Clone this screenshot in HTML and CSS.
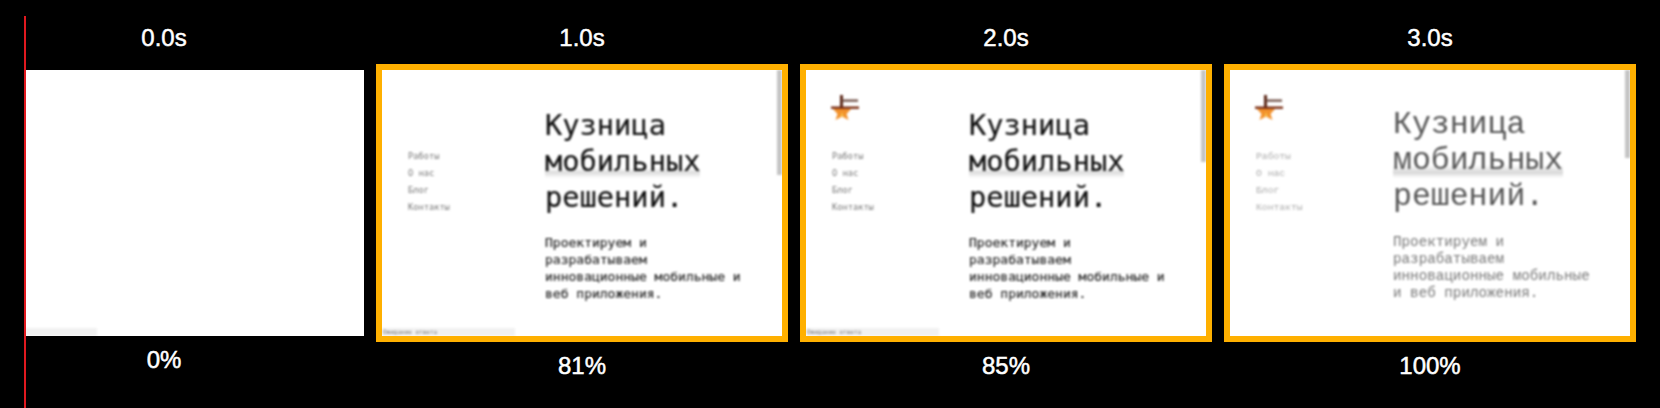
FILE: index.html
```html
<html>
<head>
  <meta charset="utf-8">
  <title>Кузница мобильных решений</title>
  <link rel="stylesheet" href="styles.css">
</head>
<body>
  <div class="gutter"></div>
  <div class="marker"></div>

  <div class="strip">
    <div class="step step-first">
      <div class="label">0.0s</div>
      <div class="shot shot-blank">
        <div class="status"></div>
      </div>
      <div class="label label-bottom">0%</div>
    </div>

    <div class="step">
      <div class="label">1.0s</div>
      <div class="frame">
        <div class="shot">
          <div class="side">
            <div class="logo-slot"></div>
            <ul class="nav">
              <li>Работы</li>
              <li>О нас</li>
              <li>Блог</li>
              <li>Контакты</li>
            </ul>
          </div>
          <div class="main">
            <h1 class="title">Кузница <span class="mark">мобильных</span> решений.</h1>
            <p class="lead">Проектируем и разрабатываем инновационные мобильные и веб приложения.</p>
          </div>
          <div class="scrollbar scrollbar-long"></div>
          <div class="status"><span class="status-text">Ожидание ответа</span></div>
        </div>
      </div>
      <div class="label label-bottom">81%</div>
    </div>

    <div class="step">
      <div class="label">2.0s</div>
      <div class="frame">
        <div class="shot">
          <div class="side">
            <div class="logo-slot">
              <svg class="logo" width="32" height="26" viewBox="0 0 32 26">
                <polygon points="12,10 14.5,14 21,14 16.5,19 18.5,25 12,21.5 5.5,25 7.5,19 3,14 9.5,14" fill="#f2902a"/>
                <polygon points="12,17 14,22 12,21 10,22" fill="#f7c14a"/>
                <rect x="1" y="11.5" width="28" height="2.4" fill="#7a2d12"/>
                <rect x="10" y="0" width="3" height="12" fill="#5e2a1a"/>
                <rect x="12" y="4.5" width="16" height="2.2" fill="#6b4a40"/>
              </svg>
            </div>
            <ul class="nav">
              <li>Работы</li>
              <li>О нас</li>
              <li>Блог</li>
              <li>Контакты</li>
            </ul>
          </div>
          <div class="main">
            <h1 class="title">Кузница <span class="mark">мобильных</span> решений.</h1>
            <p class="lead">Проектируем и разрабатываем инновационные мобильные и веб приложения.</p>
          </div>
          <div class="scrollbar scrollbar-mid"></div>
          <div class="status"><span class="status-text">Ожидание ответа</span></div>
        </div>
      </div>
      <div class="label label-bottom">85%</div>
    </div>

    <div class="step">
      <div class="label">3.0s</div>
      <div class="frame">
        <div class="shot shot-done">
          <div class="side">
            <div class="logo-slot">
              <svg class="logo" width="32" height="26" viewBox="0 0 32 26">
                <polygon points="12,10 14.5,14 21,14 16.5,19 18.5,25 12,21.5 5.5,25 7.5,19 3,14 9.5,14" fill="#f2902a"/>
                <polygon points="12,17 14,22 12,21 10,22" fill="#f7c14a"/>
                <rect x="1" y="11.5" width="28" height="2.4" fill="#7a2d12"/>
                <rect x="10" y="0" width="3" height="12" fill="#5e2a1a"/>
                <rect x="12" y="4.5" width="16" height="2.2" fill="#6b4a40"/>
              </svg>
            </div>
            <ul class="nav">
              <li>Работы</li>
              <li>О нас</li>
              <li>Блог</li>
              <li>Контакты</li>
            </ul>
          </div>
          <div class="main">
            <h1 class="title">Кузница <span class="mark">мобильных</span> решений.</h1>
            <p class="lead">Проектируем и разрабатываем инновационные мобильные и веб приложения.</p>
          </div>
          <div class="scrollbar scrollbar-short"></div>
        </div>
      </div>
      <div class="label label-bottom">100%</div>
    </div>
  </div>
</body>
</html>
```

FILE: styles.css
```css
html, body {
  margin: 0;
  padding: 0;
  height: 408px;
  background-color: #000;
  overflow: hidden;
}

/* covers the part of the first frame left of the playhead */
.gutter {
  position: absolute;
  left: 0;
  top: 0;
  width: 24px;
  height: 408px;
  background-color: #000;
  z-index: 2;
}

.marker {
  position: absolute;
  left: 24px;
  top: 16px;
  width: 2px;
  height: 392px;
  background-color: #e0191f;
  z-index: 3;
}

.strip {
  display: flex;
  gap: 12px;
  margin-left: -36px;
  padding-top: 24px;
}

.step {
  width: 412px;
  flex-shrink: 0;
}

.step-first {
  width: 400px;
}

.label {
  height: 28px;
  margin-bottom: 12px;
  font-family: "Liberation Sans", Arial, sans-serif;
  font-size: 24px;
  line-height: 28px;
  text-align: center;
  color: #fff;
  -webkit-text-stroke: 0.5px #fff;
}

.label-bottom {
  margin: 10px 0 0;
}

.step-first .label-bottom {
  margin-top: 0;
}

.frame {
  border: 6px solid #ffb000;
}

.shot {
  position: relative;
  display: flex;
  width: 400px;
  height: 266px;
  background-color: #fff;
  overflow: hidden;
  font-family: "DejaVu Sans Mono", monospace;
}

/* the thumbnails are scaled down video frames, so everything in them is soft */
.side, .main, .scrollbar, .status {
  filter: blur(0.9px);
}

.shot-blank {
  margin: 18px 0 10px;
}

.side {
  width: 137px;
  padding-left: 26px;
}

.logo-slot {
  height: 78px;
  padding-top: 25px;
  box-sizing: border-box;
}

.logo {
  display: block;
  margin-left: -2px;
}

.nav {
  list-style: none;
  margin: 0;
  padding: 0;
  font-size: 8.7px;
  line-height: 17px;
  color: #777;
}

.main {
  width: 200px;
}

.title {
  margin: 37px 0 0;
  font-size: 28.7px;
  font-weight: 400;
  line-height: 36px;
  color: #111;
  -webkit-text-stroke: 0.15px #111;
}

.mark {
  background: linear-gradient(to bottom, #fff 70%, #ddd 84%, #fff 100%);
}

.lead {
  margin: 19px 0 0;
  font-size: 13px;
  line-height: 17px;
  color: #222;
  -webkit-text-stroke: 0.15px #222;
}

.scrollbar {
  position: absolute;
  right: 0;
  top: 0;
  width: 5px;
  background-color: #c4c4c4;
}

.scrollbar-long {
  height: 105px;
}

.scrollbar-mid {
  height: 92px;
}

.scrollbar-short {
  height: 88px;
}

.status {
  position: absolute;
  left: 0;
  bottom: 0;
  width: 133px;
  height: 8px;
  background-color: #f1f1f1;
  font-size: 6px;
  line-height: 8px;
  color: #777;
}

.status-text {
  padding-left: 1px;
}

/* last frame, web font has swapped in */
.shot-done {
  font-family: "Liberation Mono", monospace;
}

.shot-done .nav {
  font-size: 9.7px;
  color: #aaa;
}

.shot-done .title {
  font-size: 31.5px;
  color: #555;
  -webkit-text-stroke: 0;
}

.shot-done .mark {
  background: linear-gradient(to bottom, #fff 62%, #d8d8d8 84%, #fff 100%);
}

.shot-done .lead {
  font-size: 14.25px;
  color: #777;
  -webkit-text-stroke: 0;
}
```
